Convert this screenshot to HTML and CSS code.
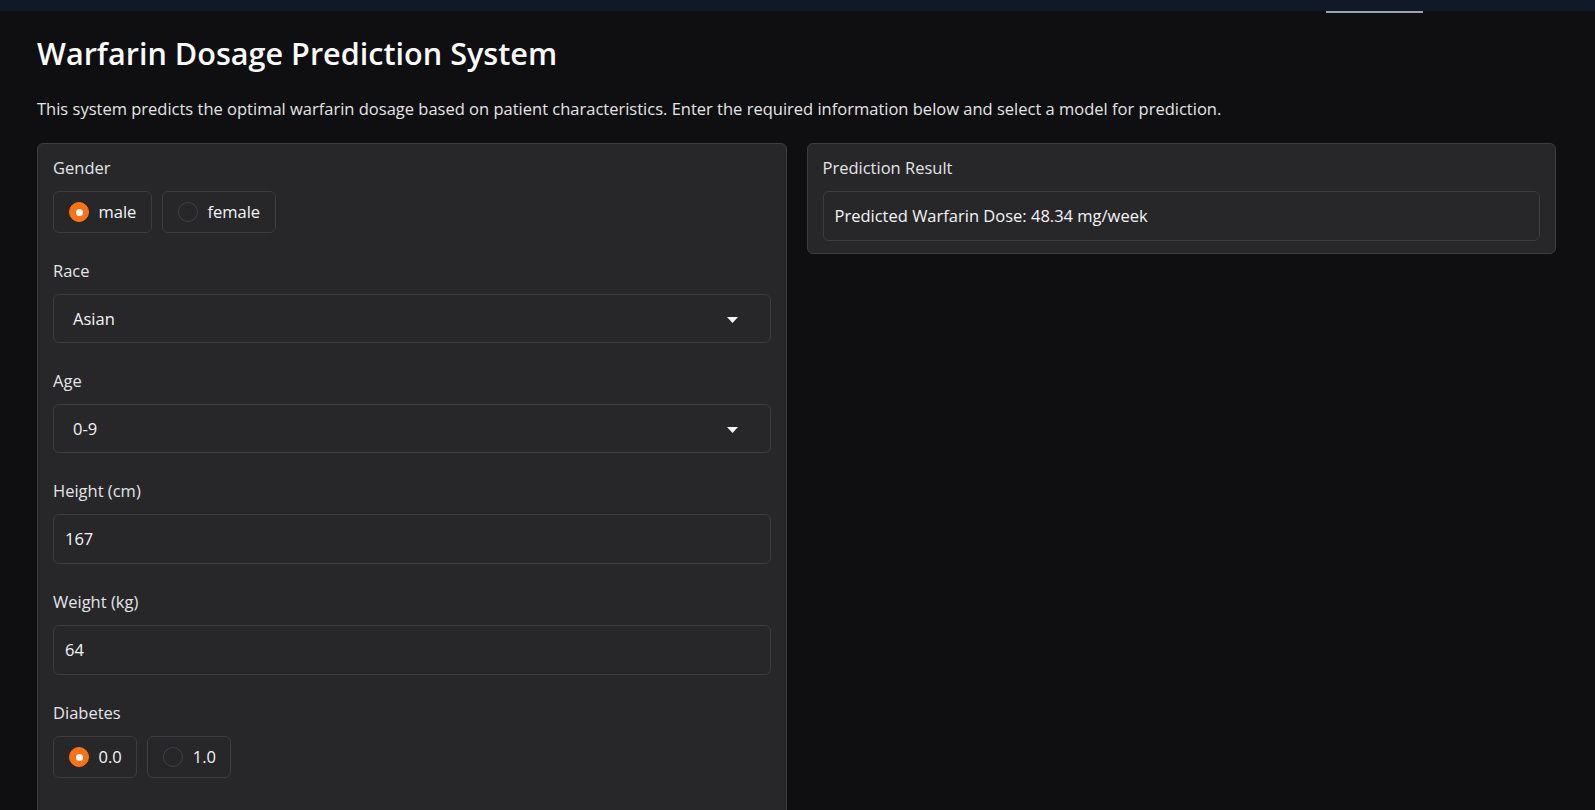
FILE: index.html
```html
<!DOCTYPE html>
<html lang="en">
<head>
<meta charset="utf-8">
<title>Warfarin Dosage Prediction System</title>
<link rel="stylesheet" href="styles.css">
</head>
<body>
<div class="topbar"><span class="tab-indicator"></span></div>
<main class="page">
  <h1 class="title">Warfarin Dosage Prediction System</h1>
  <p class="desc">This system predicts the optimal warfarin dosage based on patient characteristics. Enter the required information below and select a model for prediction.</p>
  <div class="columns">
    <section class="panel">
      <div class="field">
        <span class="label">Gender</span>
        <div class="radio-group">
          <label class="radio-item"><span class="radio checked"></span><span class="radio-text">male</span></label>
          <label class="radio-item"><span class="radio"></span><span class="radio-text">female</span></label>
        </div>
      </div>
      <div class="field">
        <span class="label">Race</span>
        <div class="select">
          <span class="value">Asian</span>
          <svg class="caret" width="11" height="6" viewBox="0 0 11 6"><path d="M0 0h11L5.5 6z" fill="#f4f4f5"/></svg>
        </div>
      </div>
      <div class="field">
        <span class="label">Age</span>
        <div class="select">
          <span class="value">0-9</span>
          <svg class="caret" width="11" height="6" viewBox="0 0 11 6"><path d="M0 0h11L5.5 6z" fill="#f4f4f5"/></svg>
        </div>
      </div>
      <div class="field">
        <span class="label">Height (cm)</span>
        <div class="input"><span class="value">167</span></div>
      </div>
      <div class="field">
        <span class="label">Weight (kg)</span>
        <div class="input"><span class="value">64</span></div>
      </div>
      <div class="field">
        <span class="label">Diabetes</span>
        <div class="radio-group">
          <label class="radio-item"><span class="radio checked"></span><span class="radio-text">0.0</span></label>
          <label class="radio-item"><span class="radio"></span><span class="radio-text">1.0</span></label>
        </div>
      </div>
      <div class="field">
        <span class="label">Simvastatin (Zocor)</span>
        <div class="radio-group">
          <label class="radio-item"><span class="radio checked"></span><span class="radio-text">0.0</span></label>
          <label class="radio-item"><span class="radio"></span><span class="radio-text">1.0</span></label>
        </div>
      </div>
    </section>
    <section class="panel result-panel">
      <div class="field">
        <span class="label">Prediction Result</span>
        <div class="output"><span class="value">Predicted Warfarin Dose: 48.34 mg/week</span></div>
      </div>
    </section>
  </div>
</main>
</body>
</html>
```
FILE: styles.css
```css
html, body {
  height: 100%;
  overflow: hidden;
}
body {
  margin: 0;
  background: #0f0f11;
  color: #f4f4f5;
  font-family: "Open Sans", "Noto Sans", sans-serif;
  font-size: 16.5px;
}
.topbar {
  position: relative;
  height: 11px;
  background: #111827;
}
.tab-indicator {
  position: absolute;
  left: 1326px;
  top: 11px;
  width: 97px;
  height: 2px;
  background: #9ca3af;
}
.page {
  padding: 0 39px 0 37px;
}
.title {
  margin: 24px 0 0;
  font-size: 30.6px;
  line-height: 37px;
  font-weight: 600;
  color: #fafafa;
}
.desc {
  margin: 25px 0 22px;
  line-height: 24px;
  color: #e4e4e7;
}
.columns {
  display: grid;
  grid-template-columns: 1fr 1fr;
  gap: 20px;
  align-items: start;
}
.panel {
  display: flex;
  flex-direction: column;
  gap: 28px;
  padding: 14px 15px 12px;
  background: #27272a;
  border: 1px solid #3c3c41;
  border-radius: 6px;
}
.field {
  display: flex;
  flex-direction: column;
}
.label {
  line-height: 20px;
  margin-bottom: 13px;
  color: #e4e4e7;
}
.radio-group {
  display: flex;
  gap: 10px;
}
.radio-item {
  display: flex;
  align-items: center;
  gap: 9.5px;
  height: 42px;
  box-sizing: border-box;
  padding: 0 14.5px 0 15px;
  border: 1px solid #3c3c41;
  border-radius: 6px;
  background: #27272a;
}
.radio {
  width: 20px;
  height: 20px;
  box-sizing: border-box;
  border-radius: 50%;
  border: 1px solid #3f3f46;
  background: #27272a;
  display: flex;
  align-items: center;
  justify-content: center;
}
.radio.checked {
  background: #f97316;
  border-color: #f97316;
}
.radio.checked::after {
  content: "";
  width: 7px;
  height: 7px;
  border-radius: 50%;
  background: #ffffff;
}
.radio-text {
  line-height: 24px;
  color: #f4f4f5;
}
.select {
  display: flex;
  align-items: center;
  justify-content: space-between;
  height: 49px;
  box-sizing: border-box;
  padding: 0 32px 0 19px;
  border: 1px solid #3c3c41;
  border-radius: 6px;
  background: #27272a;
}
.caret {
  margin-top: 2px;
}
.input {
  display: flex;
  align-items: center;
  height: 50px;
  box-sizing: border-box;
  padding: 0 11px;
  border: 1px solid #3c3c41;
  border-radius: 6px;
  background: #27272a;
}
.output {
  display: flex;
  align-items: center;
  height: 50px;
  box-sizing: border-box;
  padding: 0 11px;
  border: 1px solid #3c3c41;
  border-radius: 6px;
  background: #27272a;
}
.value {
  line-height: 24px;
  color: #f4f4f5;
}
```
